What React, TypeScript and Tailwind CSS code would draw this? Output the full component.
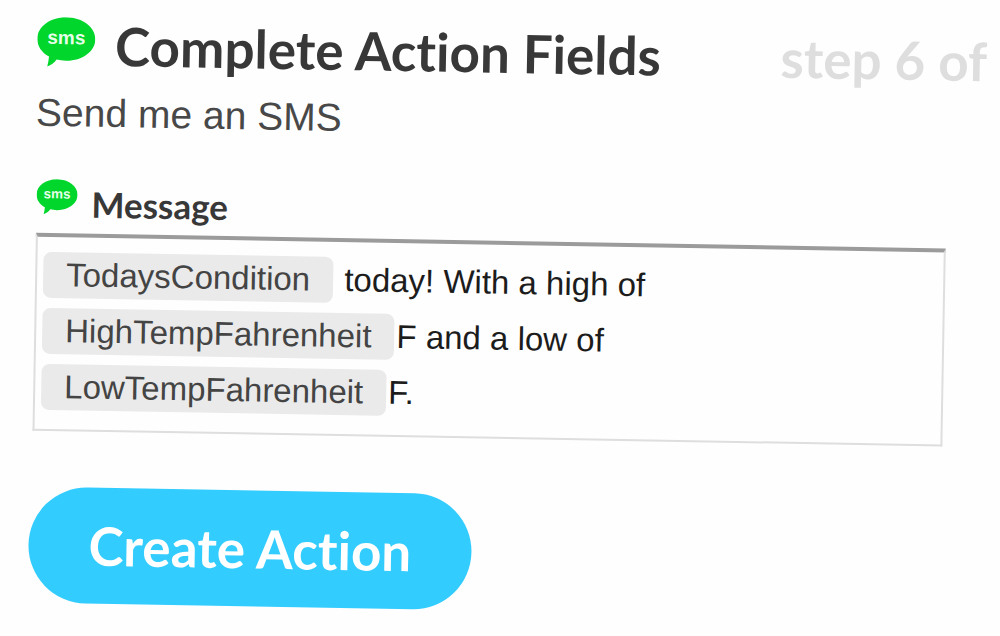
/**
 * CompleteActionFields - Last form of the action setup for the SMS service
 */

interface MessageLine {
  ingredient: string;
  text: string;
}

const MESSAGE_LINES: MessageLine[] = [
  { ingredient: "TodaysCondition", text: " today! With a high of" },
  { ingredient: "HighTempFahrenheit", text: "F and a low of" },
  { ingredient: "LowTempFahrenheit", text: "F." },
];

function SmsIcon({ className }: { className: string }) {
  return (
    <svg viewBox="0 0 58 50" className={className} aria-hidden="true">
      <path
        d="M29 0C13 0 0 9.600 0 21.800c0 7.600 4.600 14 12 17.900-.2 3.500-.8 6.800-1.600 9.900 3.800-1.200 7-3.600 9.300-7 2.900.7 6 1 9.300 1 16 0 29-9.700 29-21.800S45 0 29 0z"
        fill="#00d62b"
      />
      <text
        x="29"
        y="27"
        textAnchor="middle"
        fill="#e6ffe9"
        fontFamily="Liberation Sans, sans-serif"
        fontWeight="700"
        fontSize="19"
      >
        sms
      </text>
    </svg>
  );
}

function Ingredient({ name }: { name: string }) {
  return (
    <span className="mr-0.5 inline-block rounded-lg bg-[#eaeaea] px-[23px] leading-[46px] text-[#444]">
      {name}
    </span>
  );
}

export default function App() {
  return (
    <div className="min-h-screen overflow-hidden bg-[#fefefe] font-['Liberation_Sans',sans-serif] [font-variant-ligatures:none]">
      <main className="origin-top-left rotate-1 pl-[38px] pt-4">
        {/* Title row with the step counter */}
        <header className="flex items-start pr-3">
          <SmsIcon className="h-[50px] w-[58px] shrink-0" />
          <h1 className="ml-5 whitespace-nowrap font-['Lato',sans-serif] text-[53px] font-bold leading-[56px] text-[#383838]">
            Complete Action Fields
          </h1>
          <p className="ml-auto whitespace-nowrap font-['Lato',sans-serif] text-[53px] font-bold leading-[56px] text-[#dedede]">
            step 6 of
          </p>
        </header>

        <p className="mt-4 text-[39px] leading-[48px] text-[#484848]">Send me an SMS</p>

        <form className="mt-10 pl-0.5 pr-[50px]" onSubmit={e => e.preventDefault()}>
          <div className="flex items-start">
            <SmsIcon className="mt-0.5 h-9 w-[41px] shrink-0" />
            <label
              id="message-label"
              className="ml-3.5 mt-1.5 font-['Lato',sans-serif] text-[35px] font-bold leading-10 text-[#383838]"
            >
              Message
            </label>
          </div>

          {/* Message body, ingredients are shown as chips */}
          <div
            role="textbox"
            aria-multiline="true"
            aria-labelledby="message-label"
            tabIndex={0}
            className="mt-2.5 border-2 border-t-4 border-[#dedede] border-t-[#9b9b9b] px-1.5 pb-3.5 pt-2.5 text-[33px] text-[#1c1c1c]"
          >
            {MESSAGE_LINES.map(line => (
              <div key={line.ingredient} className="whitespace-pre leading-[56px]">
                <Ingredient name={line.ingredient} />
                {line.text}
              </div>
            ))}
          </div>

          <button
            type="submit"
            className="-ml-0.5 mt-14 rounded-full bg-[#33ccff] px-[60px] py-7 font-['Lato',sans-serif] text-[53px] font-bold leading-[60px] text-white"
          >
            Create Action
          </button>
        </form>
      </main>
    </div>
  );
}
